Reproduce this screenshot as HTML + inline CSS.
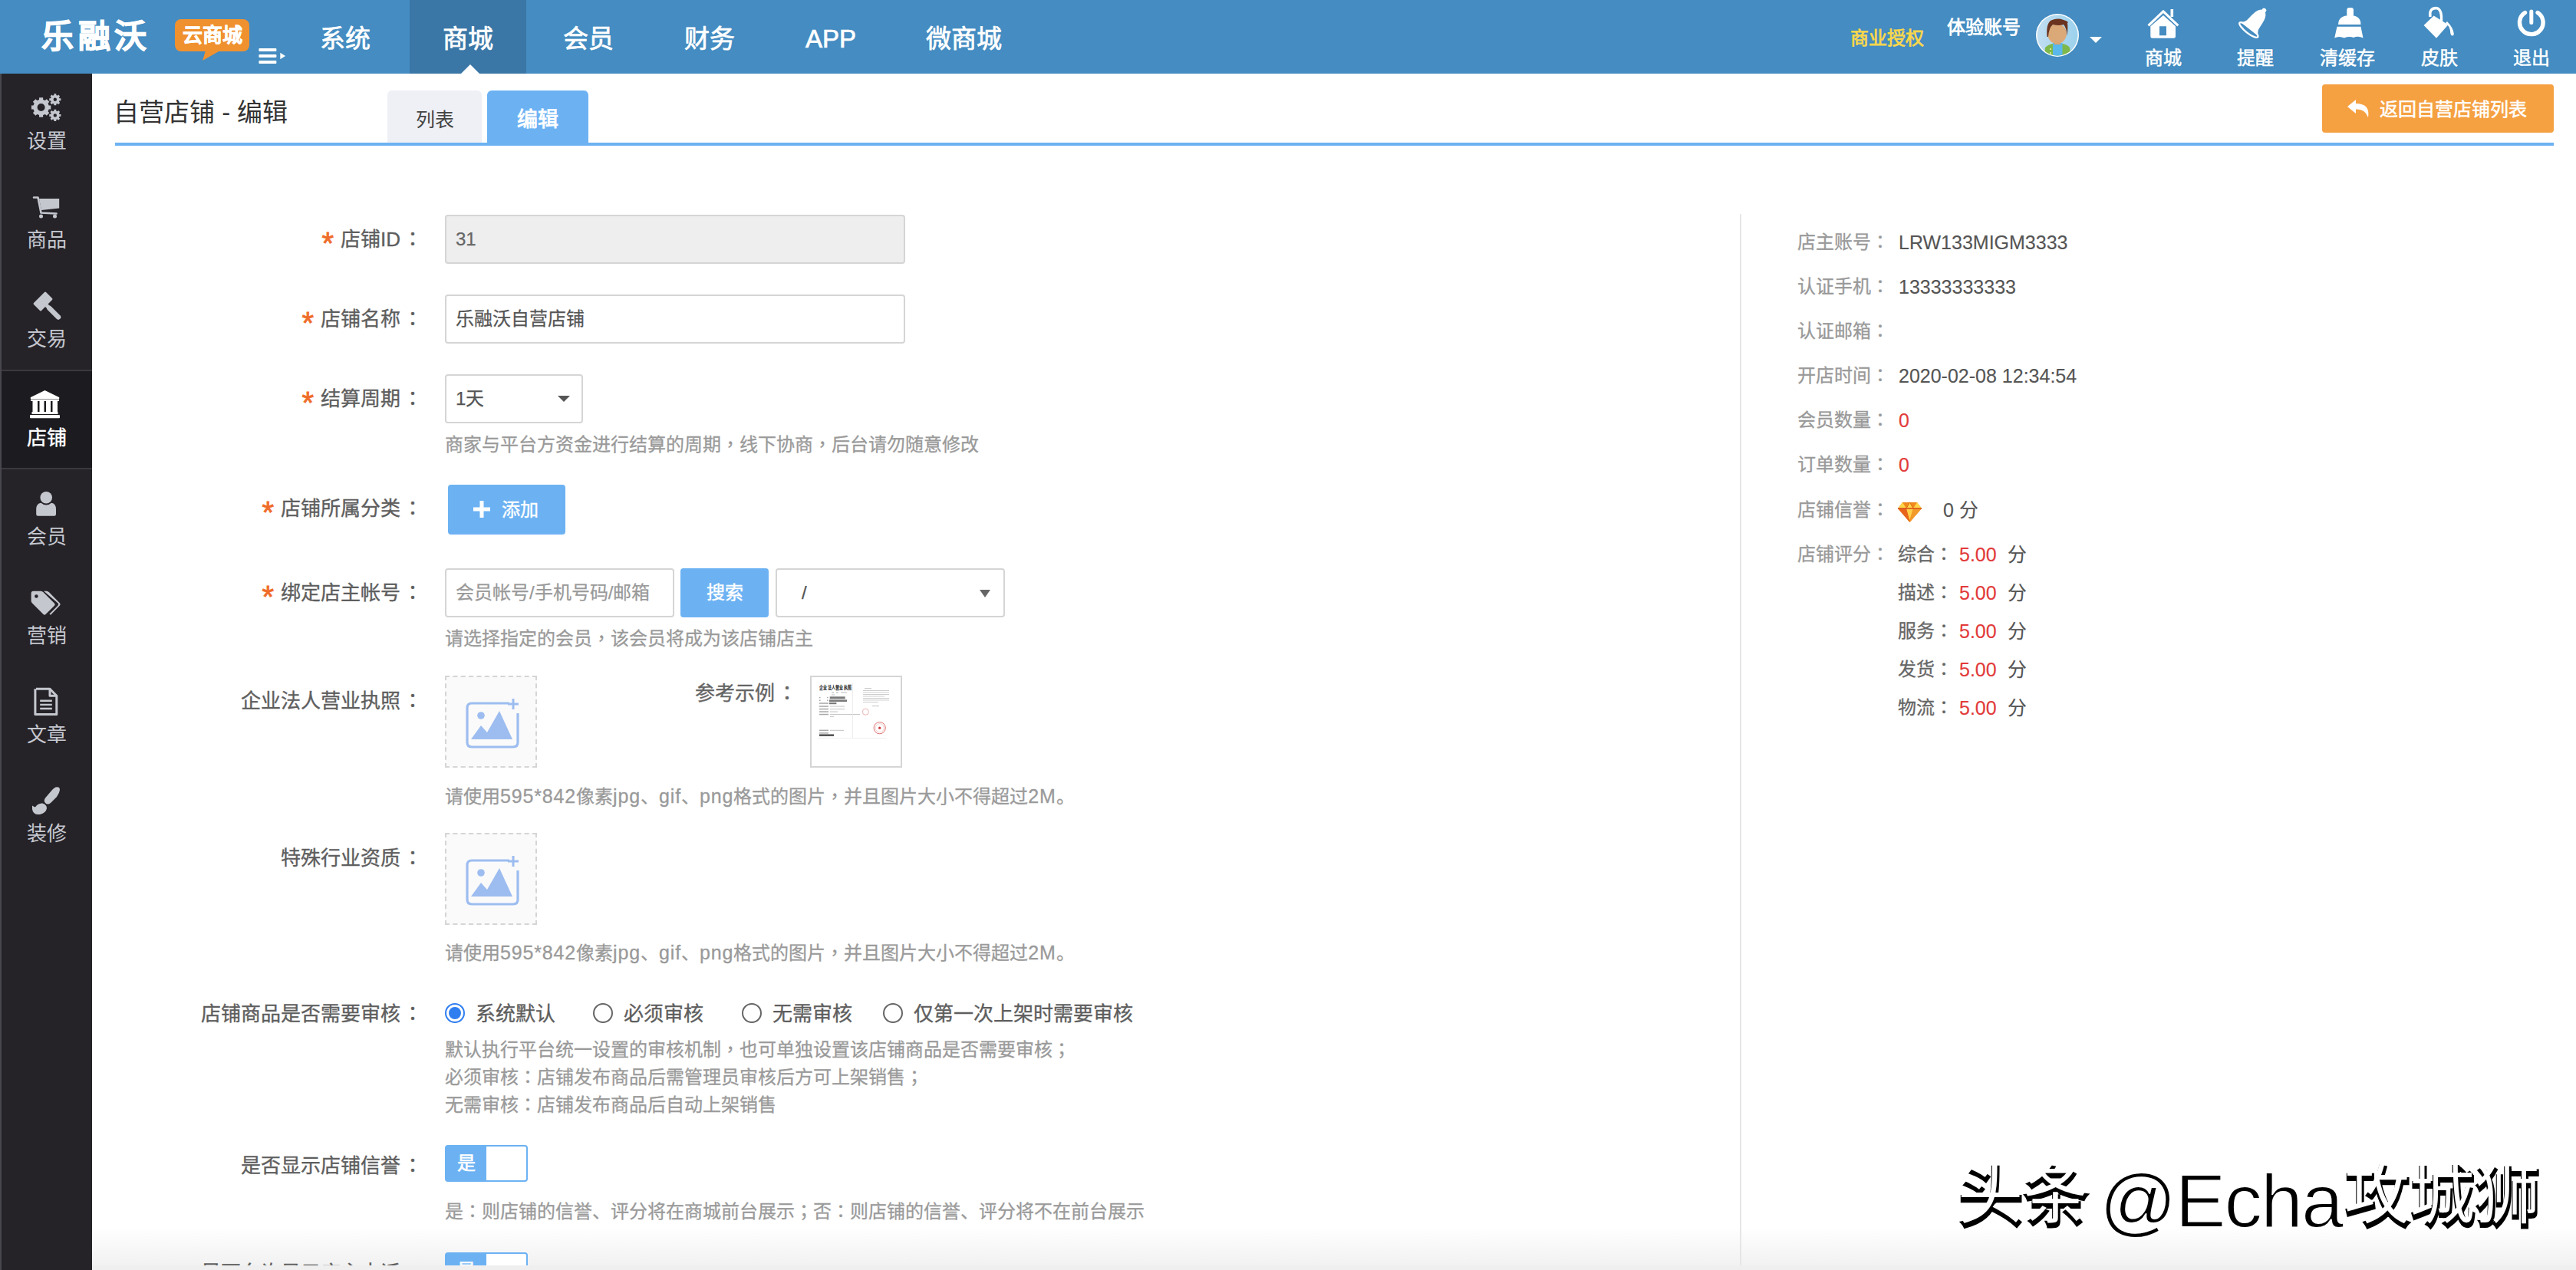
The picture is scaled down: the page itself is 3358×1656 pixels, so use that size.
<!DOCTYPE html>
<html lang="zh-CN">
<head>
<meta charset="utf-8">
<style>
*{box-sizing:border-box;margin:0;padding:0}
html,body{width:3358px;height:1656px;overflow:hidden;background:#fff}
body{font-family:"Liberation Sans",sans-serif;color:#555;position:relative}
.a{position:absolute;white-space:nowrap}
#hdr{position:absolute;left:0;top:0;width:3358px;height:96px;background:#448cc1}
#side{position:absolute;left:0;top:96px;width:120px;height:1560px;background:#252328}
.slb{position:absolute;left:2px;width:118px;text-align:center;color:#c5c7cf;font-size:26px;line-height:34px}
.slb.on{color:#fff;-webkit-text-stroke:0.4px #fff}
.nav{position:absolute;top:0;height:96px;line-height:102px;font-size:33px;color:#fff;text-align:center;-webkit-text-stroke:0.7px #fff}
.nav.on{background:#3a77a6}
.sitem{position:absolute;left:0;width:118px;height:129px;text-align:center;color:#c4c6cf;font-size:28px}
.sitem .lb{position:absolute;left:0;width:118px;top:71px;line-height:34px}
.sitem.on{background:#1c1b1f;color:#fff;border-top:2px solid #3a393e;border-bottom:2px solid #3a393e}
.hic{position:absolute;top:0;width:100px;height:96px;color:#fff;text-align:center}
.hlb{position:absolute;width:100px;top:62px;font-size:24px;line-height:28px;color:#fff;text-align:center;-webkit-text-stroke:0.5px #fff}
.lab{position:absolute;font-size:26px;color:#5e5e5e;text-align:right;line-height:40px;white-space:nowrap;-webkit-text-stroke:0.35px #5e5e5e}
.lab i{font-style:normal;color:#f06c2a;margin-right:9px;-webkit-text-stroke:0.8px #f06c2a;font-size:40px;position:relative;top:10px;line-height:20px}
.inp{position:absolute;border:2px solid #d5d5d5;border-radius:4px;font-size:24px;color:#555;line-height:60px;padding-left:12px;background:#fff;-webkit-text-stroke:0.25px currentColor}
.help{position:absolute;font-size:24px;color:#9a9a9a;line-height:32px;white-space:nowrap;-webkit-text-stroke:0.3px #9a9a9a}
.rl{position:absolute;font-size:24px;color:#999;line-height:36px;white-space:nowrap;-webkit-text-stroke:0.3px #999}
.rv{position:absolute;font-size:25px;color:#555;line-height:36px;white-space:nowrap;-webkit-text-stroke:0.15px currentColor}
.red{color:#e23a3a}

.upl{position:absolute;width:120px;height:120px;border:2px dashed #d5d5d5;background:#fafafa}
.upl:after{content:"";position:absolute;left:0;top:0}
.radio{position:absolute;width:26px;height:26px;border:2px solid #666;border-radius:50%;background:#fff}
.radio.on{border:2px solid #2f7ef0}
.radio.on:after{content:"";position:absolute;left:3px;top:3px;width:16px;height:16px;border-radius:50%;background:#2f7ef0}
.rtxt{position:absolute;font-size:26px;line-height:40px;color:#5e5e5e;white-space:nowrap;-webkit-text-stroke:0.35px #5e5e5e}
.sw{position:absolute;width:108px;height:48px;border:2px solid #6cb2f3;border-radius:4px;background:#fff}
.sw span{position:absolute;left:0;top:0;width:52px;height:44px;background:#6cb2f3;color:#fff;font-size:24px;line-height:44px;text-align:center;-webkit-text-stroke:0.6px #fff}
.rs{position:absolute;left:2474px;font-size:24px;color:#666;line-height:36px;white-space:nowrap;-webkit-text-stroke:0.3px #666}
.wm1{font-size:85px;line-height:110px;color:#000;font-weight:bold;-webkit-text-stroke:1.5px #000}
.wm2{font-size:99px;line-height:120px;letter-spacing:-2px;color:#000;font-weight:normal;-webkit-text-stroke:1.8px #fff;paint-order:normal}
.wt{color:#fff;font-weight:normal;-webkit-text-stroke:0}
.lab span{position:relative;left:3px}
.lt{font-weight:normal;font-size:25px;letter-spacing:0.85px}
.bot{position:absolute;left:120px;top:1650px;width:3238px;height:6px;background:#efefef}
</style>
</head>
<body>
<div id="hdr">
  <div class="a" style="left:54px;top:20px;font-size:42px;font-weight:bold;color:#fff;letter-spacing:5.5px;line-height:56px;-webkit-text-stroke:1px #fff">乐融沃</div>
  <div class="a" style="left:228px;top:25px;width:97px;height:42px;background:#f0912f;border-radius:8px"></div>
  <div class="a" style="left:228px;top:25px;width:97px;height:42px;line-height:42px;text-align:center;color:#fff;font-weight:bold;font-size:26px;-webkit-text-stroke:0.5px #fff">云商城</div>
  <svg class="a" style="left:260px;top:66px" width="30" height="14"><polygon points="8,0 27,0 4,13" fill="#f0912f"/></svg>
  <svg class="a" style="left:336px;top:60px" width="40" height="26"><rect x="1.4" y="3" width="23" height="4" rx="1" fill="#fff"/><rect x="1.4" y="11" width="23" height="4" rx="1" fill="#fff"/><rect x="1.4" y="19" width="23" height="4" rx="1" fill="#fff"/><polygon points="29.3,8.8 36,13 29.3,17.3" fill="#fff"/></svg>
  <div class="nav" style="left:386px;width:128px">系统</div>
  <div class="nav on" style="left:534px;width:152px">商城</div>
  <svg class="a" style="left:601px;top:84px" width="24" height="12"><polygon points="12,0 24,12 0,12" fill="#fff"/></svg>
  <div class="nav" style="left:703px;width:128px">会员</div>
  <div class="nav" style="left:861px;width:128px">财务</div>
  <div class="nav" style="left:1019px;width:128px">APP</div>
  <div class="nav" style="left:1192px;width:128px">微商城</div>

  <div class="a" style="left:2412px;top:32px;font-size:24px;line-height:36px;color:#f6d64e;font-weight:bold">商业授权</div>
  <div class="a" style="left:2538px;top:18px;font-size:24px;line-height:36px;color:#fff;font-weight:bold">体验账号</div>
  <svg class="a" style="left:2650px;top:14px" width="64" height="64" viewBox="2650 14 64 64">
    <defs><clipPath id="avc"><circle cx="2682" cy="46" r="26.5"/></clipPath>
    <linearGradient id="avg" x1="0" y1="0" x2="1" y2="0"><stop offset="0" stop-color="#c4dff2"/><stop offset="1" stop-color="#98d0ec"/></linearGradient></defs>
    <circle cx="2682" cy="46" r="28" fill="#fff"/>
    <g clip-path="url(#avc)">
      <rect x="2650" y="14" width="64" height="64" fill="url(#avg)"/>
      <path d="M2664 80 L2666 62 Q2670 58 2676 57 L2688.5 57 Q2695 58 2698 62 L2701 80Z" fill="#7fb84a"/>
      <rect x="2676" y="56" width="12.5" height="24" fill="#5ab8ea"/>
      <circle cx="2673" cy="64" r="1" fill="#f4f0a0"/><circle cx="2673" cy="69" r="1" fill="#f4f0a0"/>
      <rect x="2678" y="50" width="8" height="8" fill="#e0a060"/>
      <ellipse cx="2681.5" cy="44" rx="12.3" ry="13" fill="#dba877"/>
      <path d="M2668.5 48 Q2667 30 2674 26.5 Q2682 23 2690 26 Q2694 27 2696 29 L2695 30 Q2696 36 2694.5 47 Q2694 36 2690 32 Q2684 34 2676 32 Q2671 36 2670 48Z" fill="#6a3420"/>
    </g>
  </svg>
  <svg class="a" style="left:2724px;top:48px" width="16" height="9"><polygon points="0,0 16,0 8,8" fill="#fff"/></svg>

  <svg class="a" style="left:2780px;top:0px" width="560" height="96" viewBox="2780 0 560 96">
    <g fill="#fff">
      <path d="M2800.5 33.3 L2820 14.8 L2839.3 33.3" stroke="#fff" stroke-width="3.2" fill="none" stroke-linejoin="round"/>
      <rect x="2829.5" y="12" width="3.6" height="10"/>
      <path d="M2803.3 34.3 L2820 20 L2836 34.3 L2836 47.5 Q2836 49.7 2833.8 49.7 L2805.5 49.7 Q2803.3 49.7 2803.3 47.5Z M2815 34.3 L2815 46.2 L2824 46.2 L2824 34.3Z" fill-rule="evenodd"/>
    </g>
    <g fill="#fff" transform="translate(2940 28) rotate(38) scale(0.97)">
      <circle cx="0" cy="-19" r="3"/>
      <path d="M-3.5 -17.5 Q0 -19 3.5 -17.5 Q8 -14 9 -4 L10 6 Q11 10 15 13 L-15 13 Q-11 10 -10 6 L-9 -4 Q-8 -14 -3.5 -17.5Z"/>
      <ellipse cx="0" cy="14.5" rx="15.5" ry="4.2" fill="none" stroke="#fff" stroke-width="2.4"/>
    </g>
    <g fill="#fff">
      <rect x="3059.3" y="9.9" width="8.7" height="12" rx="3"/>
      <path d="M3048 32 Q3048 20 3063.6 20 Q3077.5 20 3077.5 32Z"/>
      <path d="M3046.5 34.8 L3077.5 34.8 L3080.5 49.5 Q3074 46.5 3068 49 Q3062 47 3056 49.5 Q3049 46.5 3043.2 49.5Z"/>
    </g>
    <g fill="#fff">
      <path d="M3159.6 33 L3172.6 20.4 L3191.4 32.3 L3176 49.7Z"/>
      <path d="M3168 22 Q3166 11 3175.5 10.5 Q3184 11 3182.3 30" stroke="#fff" stroke-width="3.4" fill="none"/>
      <circle cx="3182.3" cy="30" r="2.2"/>
      <path d="M3190 28 Q3198 36 3198.8 44 Q3199 47 3196 46.5 Q3194 45 3194 40 Q3193 34 3188 30Z"/>
    </g>
    <g fill="none" stroke="#fff">
      <path d="M3291.5 16.5 A15.3 15.3 0 1 0 3308.1 16.5" stroke-width="5.4" stroke-linecap="round"/>
      <path d="M3299.8 15 L3299.8 29.5" stroke-width="5" stroke-linecap="round"/>
    </g>
  </svg>
  <div class="hlb" style="left:2770px">商城</div>
  <div class="hlb" style="left:2890px">提醒</div>
  <div class="hlb" style="left:3010px">清缓存</div>
  <div class="hlb" style="left:3130px">皮肤</div>
  <div class="hlb" style="left:3250px">退出</div>
</div>

<div id="side">
  <div class="a" style="left:0;top:0;width:2px;height:1560px;background:#48474d"></div>
  <div class="a" style="left:2px;top:386px;width:118px;height:130px;background:#1c1b1f;border-top:2px solid #3a393e;border-bottom:2px solid #3a393e"></div>
  <svg class="a" style="left:0;top:0" width="120" height="1560" viewBox="0 96 120 1560">
  <g fill="#c5c7cf" fill-rule="evenodd"><path d="M51.01 129.93 L51.08 127.35 L56.12 127.35 L56.19 129.93 L58.89 131.05 L60.77 129.27 L64.33 132.83 L62.55 134.71 L63.67 137.41 L66.25 137.48 L66.25 142.52 L63.67 142.59 L62.55 145.29 L64.33 147.17 L60.77 150.73 L58.89 148.95 L56.19 150.07 L56.12 152.65 L51.08 152.65 L51.01 150.07 L48.31 148.95 L46.43 150.73 L42.87 147.17 L44.65 145.29 L43.53 142.59 L40.95 142.52 L40.95 137.48 L43.53 137.41 L44.65 134.71 L42.87 132.83 L46.43 129.27 L48.31 131.05Z M48.60 140.00 A5.00 5.00 0 1 0 58.60 140.00 A5.00 5.00 0 1 0 48.60 140.00 Z"/><path d="M70.33 124.09 L70.30 122.25 L73.30 122.25 L73.27 124.09 L74.80 124.72 L76.08 123.40 L78.20 125.52 L76.88 126.80 L77.51 128.33 L79.35 128.30 L79.35 131.30 L77.51 131.27 L76.88 132.80 L78.20 134.08 L76.08 136.20 L74.80 134.88 L73.27 135.51 L73.30 137.35 L70.30 137.35 L70.33 135.51 L68.80 134.88 L67.52 136.20 L65.40 134.08 L66.72 132.80 L66.09 131.27 L64.25 131.30 L64.25 128.30 L66.09 128.33 L66.72 126.80 L65.40 125.52 L67.52 123.40 L68.80 124.72Z M69.60 129.80 A2.20 2.20 0 1 0 74.00 129.80 A2.20 2.20 0 1 0 69.60 129.80 Z"/><path d="M70.33 144.69 L70.30 142.85 L73.30 142.85 L73.27 144.69 L74.80 145.32 L76.08 144.00 L78.20 146.12 L76.88 147.40 L77.51 148.93 L79.35 148.90 L79.35 151.90 L77.51 151.87 L76.88 153.40 L78.20 154.68 L76.08 156.80 L74.80 155.48 L73.27 156.11 L73.30 157.95 L70.30 157.95 L70.33 156.11 L68.80 155.48 L67.52 156.80 L65.40 154.68 L66.72 153.40 L66.09 151.87 L64.25 151.90 L64.25 148.90 L66.09 148.93 L66.72 147.40 L65.40 146.12 L67.52 144.00 L68.80 145.32Z M69.60 150.40 A2.20 2.20 0 1 0 74.00 150.40 A2.20 2.20 0 1 0 69.60 150.40 Z"/></g>
  <g fill="#c5c7cf">
    <path d="M44 257.5 L49.5 257.5 L53.5 277.5 L73.5 278.5" stroke="#c5c7cf" stroke-width="2.6" fill="none" stroke-linecap="round" stroke-linejoin="round"/>
    <path d="M51 259 L77.2 259 L77.2 271.5 L54 274Z"/>
    <circle cx="53.5" cy="282" r="2.5"/><circle cx="71.5" cy="282" r="2.5"/>
  </g>
  <g fill="#c5c7cf">
    <path d="M58 381 Q59 380 60 381 L68 389 Q69 390 68 391 L54 405 Q53 406 52 405 L44 397 Q43 396 44 395Z"/>
    <path d="M58.5 399.5 L62 396 L66 400 L62.5 403.5Z"/>
    <path d="M64.5 402 L76 413.5" stroke="#c5c7cf" stroke-width="6.5" stroke-linecap="round"/>
  </g>
  <g fill="#fff">
    <path d="M58.5 509 L77 518 Q78 520 76 520 L41 520 Q39 520 40 518Z"/>
    <rect x="40" y="520.5" width="37" height="2.5"/>
    <rect x="42.5" y="523" width="6.5" height="14"/><rect x="51.5" y="523" width="6" height="14"/><rect x="60" y="523" width="6" height="14"/><rect x="68.5" y="523" width="6.5" height="14"/>
    <rect x="41.5" y="537" width="34" height="3"/>
    <rect x="39" y="541" width="39" height="4.3" rx="1"/>
  </g>
  <g fill="#c5c7cf">
    <circle cx="60.2" cy="648.8" r="7.8"/>
    <path d="M47.2 664 Q47.2 656.5 53.5 655.7 Q56.5 658.5 60.2 658.5 Q64 658.5 67 655.7 Q73 656.5 73 664 L73 670.5 Q73 672.7 70.8 672.7 L49.4 672.7 Q47.2 672.7 47.2 670.5Z"/>
  </g>
  <g fill="#c5c7cf">
    <path d="M43.5 770.8 L53.5 770.8 Q55 770.8 56.5 772.3 L71 786.8 Q72.5 788.3 71 789.8 L59.5 801 Q58 802.5 56.5 801 L42 786.5 Q40.6 785 40.6 783.5 L40.6 773.7 Q40.6 770.8 43.5 770.8Z M47.4 775.2 A2.3 2.3 0 1 0 47.4 779.8 A2.3 2.3 0 1 0 47.4 775.2Z" fill-rule="evenodd"/>
    <path d="M57 770.8 L61 770.8 Q62.5 770.8 64 772.3 L78 786.5 Q79.4 788 78 789.5 L66.8 801 Q65.8 802 64.8 801 L64.5 800.6 L75.5 789.5 Q77 788 75.5 786.5Z"/>
  </g>
  <g fill="none" stroke="#c5c7cf" stroke-width="3">
    <path d="M47 898.3 L65 898.3 L73.8 907.2 L73.8 931.5 L45.9 931.5 L45.9 898.3" stroke-linejoin="round"/>
    <path d="M65 898.3 L65 907.2 L73.8 907.2" stroke-linejoin="round"/>
    <path d="M52.2 913.8 H67.8 M52.2 918.9 H67.8 M52.2 924 H67.8" stroke-width="2.4"/>
  </g>
  <g fill="#c5c7cf">
    <path d="M72.5 1026.5 Q78 1025 78 1030 Q77.5 1034 74 1039 L66 1047 Q62 1050 59 1047 Q56.5 1044 59 1040.5 L68 1030 Q70 1027.5 72.5 1026.5Z"/>
    <path d="M42 1050.5 L45.5 1052.5 Q47 1051.5 48 1050 Q51 1047 55.5 1047.5 Q61 1049 61 1054 Q60 1060 52 1062 Q43 1063 42 1055Z"/>
  </g>
</svg>
  <div class="slb" style="top:71px">设置</div>
  <div class="slb" style="top:200px">商品</div>
  <div class="slb" style="top:329px">交易</div>
  <div class="slb on" style="top:458px">店铺</div>
  <div class="slb" style="top:587px">会员</div>
  <div class="slb" style="top:716px">营销</div>
  <div class="slb" style="top:845px">文章</div>
  <div class="slb" style="top:974px">装修</div>
</div>

<!-- bottom fade -->
<div class="a" style="left:120px;top:1600px;width:3238px;height:56px;background:linear-gradient(to bottom,#fff,#f0f0f0)"></div>
<!-- content -->
<div class="a" style="left:148px;top:123px;font-size:33px;line-height:48px;color:#333">自营店铺 - 编辑</div>
<div class="a" style="left:505px;top:118px;width:123px;height:68px;background:#eef0f6;border-radius:6px 6px 0 0;font-size:25px;line-height:68px;text-align:center;color:#444;padding-top:4px">列表</div>
<div class="a" style="left:635px;top:118px;width:132px;height:68px;background:#6cb2f3;border-radius:6px 6px 0 0;font-size:27px;font-weight:bold;line-height:68px;text-align:center;color:#fff;padding-top:4px">编辑</div>
<div class="a" style="left:150px;top:186px;width:3179px;height:4px;background:#6cb2f3"></div>
<div class="a" style="left:3027px;top:110px;width:302px;height:63px;background:#f5a142;border-radius:4px"></div>
<svg class="a" style="left:3059px;top:129px" width="32" height="26" viewBox="0 0 32 26"><path d="M12 1 L1 10 L12 19 L12 13.5 Q24 12.5 28 24 Q31 6 12 6Z" fill="#fff"/></svg>
<div class="a" style="left:3102px;top:125px;color:#fff;font-size:24px;line-height:36px;-webkit-text-stroke:0.5px #fff">返回自营店铺列表</div>


<!-- form -->
<div class="lab" style="right:2810px;top:292px"><i>*</i>店铺ID<span lang="zh-TW">：</span></div>
<div class="inp" style="left:580px;top:280px;width:600px;height:64px;background:#eeeeee;color:#666">31</div>

<div class="lab" style="right:2810px;top:396px"><i>*</i>店铺名称<span lang="zh-TW">：</span></div>
<div class="inp" style="left:580px;top:384px;width:600px;height:64px">乐融沃自营店铺</div>

<div class="lab" style="right:2810px;top:500px"><i>*</i>结算周期<span lang="zh-TW">：</span></div>
<div class="inp" style="left:580px;top:488px;width:180px;height:64px">1天</div>
<svg class="a" style="left:727px;top:516px" width="16" height="8"><polygon points="0,0 16,0 8,8" fill="#555"/></svg>
<div class="help" style="left:580px;top:564px">商家与平台方资金进行结算的周期<span lang="zh-TW">，</span>线下协商<span lang="zh-TW">，</span>后台请勿随意修改</div>

<div class="lab" style="right:2810px;top:643px"><i>*</i>店铺所属分类<span lang="zh-TW">：</span></div>
<div class="a" style="left:584px;top:632px;width:153px;height:65px;background:#6cb2f3;border-radius:4px;color:#fff;font-size:24px;line-height:65px;padding-left:70px;-webkit-text-stroke:0.4px #fff">添加</div>
<svg class="a" style="left:617px;top:653px" width="22" height="22"><rect x="8.5" y="0" width="5" height="22" fill="#fff"/><rect x="0" y="8.5" width="22" height="5" fill="#fff"/></svg>

<div class="lab" style="right:2810px;top:753px"><i>*</i>绑定店主帐号<span lang="zh-TW">：</span></div>
<div class="inp" style="left:580px;top:741px;width:299px;height:64px;color:#999">会员帐号/手机号码/邮箱</div>
<div class="a" style="left:887px;top:741px;width:115px;height:64px;background:#6cb2f3;border-radius:4px;color:#fff;font-size:24px;line-height:64px;text-align:center;-webkit-text-stroke:0.4px #fff">搜索</div>
<div class="inp" style="left:1011px;top:741px;width:299px;height:64px;padding-left:32px">/</div>
<svg class="a" style="left:1277px;top:769px" width="14" height="10"><polygon points="0,0 14,0 7,10" fill="#666"/></svg>
<div class="help" style="left:580px;top:817px">请选择指定的会员<span lang="zh-TW">，</span>该会员将成为该店铺店主</div>

<div class="lab" style="right:2810px;top:894px">企业法人营业执照<span lang="zh-TW">：</span></div>
<div class="upl" style="left:580px;top:881px"><svg class="a" style="left:25px;top:25px" width="76" height="68" viewBox="0 0 76 68"><g fill="none" stroke="#9dbdf0" stroke-width="3.2"><path d="M57 9 L8 9 Q2 9 2 15 L2 60 Q2 66 8 66 L62 66 Q68 66 68 60 L68 22"/><path d="M62 3 V17 M55 10 H69" stroke-width="3"/></g><g fill="#9dbdf0"><circle cx="20" cy="25" r="4.8"/><path d="M7 56 L20 38 L28 47 L44 19 L61 56Z"/></g></svg></div>
<div class="lab" style="left:906px;top:884px;color:#666">参考示例<span lang="zh-TW">：</span></div>
<div class="a" style="left:1056px;top:881px;width:120px;height:120px;border:2px solid #d5d5d5;background:#fff">
  <svg width="116" height="116" viewBox="1058 883 116 116">
    <text x="1068" y="898.5" font-size="6.6" fill="#222" font-weight="bold" textLength="42" lengthAdjust="spacingAndGlyphs">企业法人营业执照</text>
    <g fill="#bbb"><rect x="1084" y="902.5" width="3" height="1.2"/><rect x="1090" y="902.5" width="3" height="1.2"/><rect x="1096" y="902.5" width="8" height="1"/><rect x="1084" y="905.5" width="4" height="1"/></g>
    <g fill="#7a7a7a"><rect x="1081.7" y="908.3" width="20" height="3"/><rect x="1081" y="912.4" width="23" height="2.6"/><rect x="1081" y="916" width="9.4" height="2.2"/></g>
    <g fill="#a8a8a8"><rect x="1068" y="908.8" width="1.5" height="1.5"/><rect x="1078" y="908.8" width="1.5" height="1.5"/><rect x="1068" y="912.5" width="1.5" height="1.5"/><rect x="1078" y="912.5" width="1.5" height="1.5"/><rect x="1068" y="916.3" width="12" height="1.5"/>
      <rect x="1068" y="920.3" width="12" height="1.5"/><rect x="1068" y="923.8" width="12" height="1.5"/><rect x="1068" y="927.3" width="12" height="1.5"/><rect x="1068" y="930.8" width="12" height="1.5"/>
      <rect x="1068" y="951.6" width="12" height="1.4"/><rect x="1068" y="955.2" width="12" height="1.4"/></g>
    <g fill="#c8c8c8"><rect x="1082" y="920.5" width="19" height="1.1"/><rect x="1082" y="924" width="19" height="1.1"/><rect x="1082" y="927.5" width="10" height="1.1"/><rect x="1082" y="931" width="39" height="1.1"/><rect x="1082" y="934" width="5" height="1.1"/>
      <rect x="1082" y="951.8" width="18" height="1.1"/>
      <rect x="1127" y="897" width="9" height="1"/><rect x="1125" y="900" width="34" height="0.9"/><rect x="1125" y="902.5" width="34" height="0.9"/><rect x="1125" y="905" width="34" height="0.9"/><rect x="1125" y="907.5" width="28" height="0.9"/><rect x="1125" y="910" width="34" height="0.9"/><rect x="1125" y="912.5" width="34" height="0.9"/><rect x="1125" y="915" width="20" height="0.9"/>
      <rect x="1137" y="920" width="9" height="1.1"/></g>
    <rect x="1068" y="957.4" width="19" height="2.6" fill="#555"/>
    <rect x="1111" y="891" width="0.8" height="72" fill="#e8e8e8"/>
    <rect x="1066" y="962" width="90" height="0.8" fill="#eee"/>
    <circle cx="1128.3" cy="928.2" r="4" fill="none" stroke="#e9a0a0" stroke-width="0.8"/>
    <circle cx="1146.7" cy="949.2" r="7.6" fill="none" stroke="#d86060" stroke-width="0.9"/>
    <circle cx="1146.7" cy="949.2" r="5.6" fill="none" stroke="#e8a0a0" stroke-width="0.5"/>
    <circle cx="1146.7" cy="949.2" r="1.6" fill="#c33"/>
  </svg>
</div>
<div class="help" style="left:580px;top:1022px">请使用<b class="lt">595*842</b>像素<b class="lt">jpg</b>、<b class="lt">gif</b>、<b class="lt">png</b>格式的图片<span lang="zh-TW">，</span>并且图片大小不得超过<b class="lt">2M</b>。</div>

<div class="lab" style="right:2810px;top:1099px">特殊行业资质<span lang="zh-TW">：</span></div>
<div class="upl" style="left:580px;top:1086px"><svg class="a" style="left:25px;top:25px" width="76" height="68" viewBox="0 0 76 68"><g fill="none" stroke="#9dbdf0" stroke-width="3.2"><path d="M57 9 L8 9 Q2 9 2 15 L2 60 Q2 66 8 66 L62 66 Q68 66 68 60 L68 22"/><path d="M62 3 V17 M55 10 H69" stroke-width="3"/></g><g fill="#9dbdf0"><circle cx="20" cy="25" r="4.8"/><path d="M7 56 L20 38 L28 47 L44 19 L61 56Z"/></g></svg></div>
<div class="help" style="left:580px;top:1226px">请使用<b class="lt">595*842</b>像素<b class="lt">jpg</b>、<b class="lt">gif</b>、<b class="lt">png</b>格式的图片<span lang="zh-TW">，</span>并且图片大小不得超过<b class="lt">2M</b>。</div>

<div class="lab" style="right:2810px;top:1302px">店铺商品是否需要审核<span lang="zh-TW">：</span></div>
<div class="radio on" style="left:580px;top:1308px"></div><div class="rtxt" style="left:620px;top:1302px">系统默认</div>
<div class="radio" style="left:773px;top:1308px"></div><div class="rtxt" style="left:813px;top:1302px">必须审核</div>
<div class="radio" style="left:967px;top:1308px"></div><div class="rtxt" style="left:1007px;top:1302px">无需审核</div>
<div class="radio" style="left:1151px;top:1308px"></div><div class="rtxt" style="left:1191px;top:1302px">仅第一次上架时需要审核</div>
<div class="help" style="left:580px;top:1351px;line-height:36px">默认执行平台统一设置的审核机制<span lang="zh-TW">，</span>也可单独设置该店铺商品是否需要审核<span lang="zh-TW">；</span><br>必须审核<span lang="zh-TW">：</span>店铺发布商品后需管理员审核后方可上架销售<span lang="zh-TW">；</span><br>无需审核<span lang="zh-TW">：</span>店铺发布商品后自动上架销售</div>

<div class="lab" style="right:2810px;top:1500px">是否显示店铺信誉<span lang="zh-TW">：</span></div>
<div class="sw" style="left:580px;top:1493px"><span>是</span></div>
<div class="help" style="left:580px;top:1564px">是<span lang="zh-TW">：</span>则店铺的信誉、评分将在商城前台展示<span lang="zh-TW">；</span>否<span lang="zh-TW">：</span>则店铺的信誉、评分将不在前台展示</div>

<div class="lab" style="right:2810px;top:1640px">是否允许显示店主电话<span lang="zh-TW">：</span></div>
<div class="sw" style="left:580px;top:1633px"><span>是</span></div>

<!-- right panel -->
<div class="a" style="left:2268px;top:279px;width:2px;height:1377px;background:#e6e6e6"></div>
<div class="rl" style="left:2343px;top:298px">店主账号<span lang="zh-TW">：</span></div><div class="rv" style="left:2475px;top:298px">LRW133MIGM3333</div>
<div class="rl" style="left:2343px;top:356px">认证手机<span lang="zh-TW">：</span></div><div class="rv" style="left:2475px;top:356px">13333333333</div>
<div class="rl" style="left:2343px;top:414px">认证邮箱<span lang="zh-TW">：</span></div>
<div class="rl" style="left:2343px;top:472px">开店时间<span lang="zh-TW">：</span></div><div class="rv" style="left:2475px;top:472px">2020-02-08 12:34:54</div>
<div class="rl" style="left:2343px;top:530px">会员数量<span lang="zh-TW">：</span></div><div class="rv red" style="left:2475px;top:530px">0</div>
<div class="rl" style="left:2343px;top:588px">订单数量<span lang="zh-TW">：</span></div><div class="rv red" style="left:2475px;top:588px">0</div>
<div class="rl" style="left:2343px;top:647px">店铺信誉<span lang="zh-TW">：</span></div>
<svg class="a" style="left:2473px;top:654px" width="33" height="28" viewBox="0 0 33 28"><path d="M7 1 L26 1 L32 9 L16.5 27 L1 9Z" fill="#f08a1c"/><path d="M7 1 L12 9 L16.5 1 L21 9 L26 1 L32 9 L1 9Z" fill="#ffd54a"/><path d="M12 9 L16.5 24 L21 9Z" fill="#ffd04a"/><path d="M1 9 L16.5 27 L12 9Z" fill="#e8641c"/><path d="M32 9 L16.5 27 L21 9Z" fill="#f29a2a"/><path d="M1 9 L32 9" stroke="#d8501a" stroke-width="1.6"/><path d="M12 9 L16.5 1 L21 9" stroke="#e06a1a" stroke-width="1" fill="none"/></svg>
<div class="rv" style="left:2533px;top:647px">0 分</div>
<div class="rl" style="left:2343px;top:705px">店铺评分<span lang="zh-TW">：</span></div>
<div class="rs" style="top:705px">综合<span lang="zh-TW">：</span></div><div class="rv red" style="left:2554px;top:705px">5.00</div><div class="rv" style="left:2617px;top:705px">分</div>
<div class="rs" style="top:755px">描述<span lang="zh-TW">：</span></div><div class="rv red" style="left:2554px;top:755px">5.00</div><div class="rv" style="left:2617px;top:755px">分</div>
<div class="rs" style="top:805px">服务<span lang="zh-TW">：</span></div><div class="rv red" style="left:2554px;top:805px">5.00</div><div class="rv" style="left:2617px;top:805px">分</div>
<div class="rs" style="top:855px">发货<span lang="zh-TW">：</span></div><div class="rv red" style="left:2554px;top:855px">5.00</div><div class="rv" style="left:2617px;top:855px">分</div>
<div class="rs" style="top:905px">物流<span lang="zh-TW">：</span></div><div class="rv red" style="left:2554px;top:905px">5.00</div><div class="rv" style="left:2617px;top:905px">分</div>


<div class="bot"></div>
<!-- watermark -->
<div class="a" style="left:2540px;top:1480px;width:818px;height:134px;overflow:hidden">
<div class="a wm1" style="left:13px;top:29px">头条</div>
<div class="a wm2" style="left:197px;top:26px">@Echa</div>
<div class="a wm1" style="left:517px;top:29px">攻城狮</div>
<div class="a wm1 wt" style="left:12px;top:24px">头条</div>
<div class="a wm1 wt" style="left:516px;top:24px">攻城狮</div>
</div>
</body>
</html>
